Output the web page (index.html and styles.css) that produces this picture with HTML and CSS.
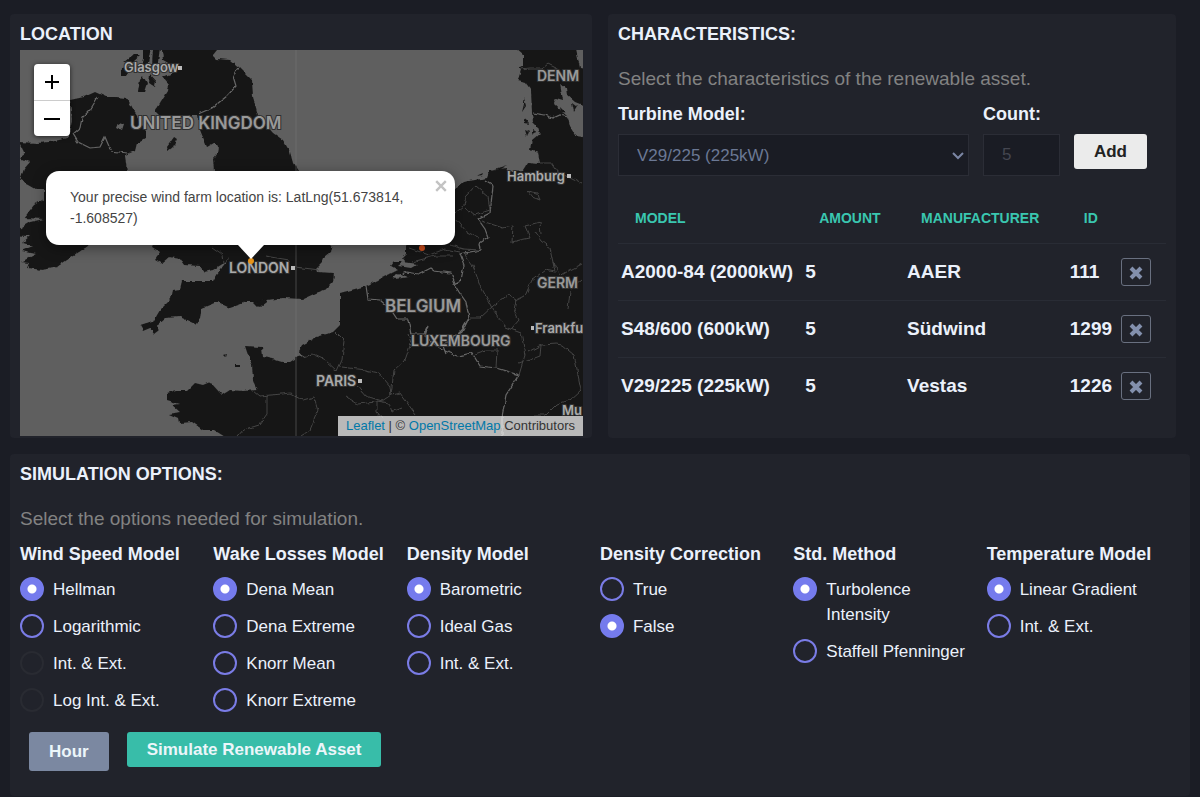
FILE: index.html
```html
<!DOCTYPE html>
<html lang="en">
<head>
<meta charset="utf-8">
<title>Wind farm simulation</title>
<link rel="stylesheet" href="styles.css">
</head>
<body>
<main class="page">
  <div class="top-row">
    <section class="panel panel-map">
      <h2 class="panel-title">LOCATION</h2>
      <div class="map">
        <svg class="map-canvas" viewBox="20 50 563 386" preserveAspectRatio="xMidYMid slice" role="img" aria-label="Map of north-west Europe">
          <defs>
            <filter id="coast" x="-5%" y="-5%" width="110%" height="110%">
              <feTurbulence type="fractalNoise" baseFrequency="0.15" numOctaves="2" seed="4" result="n"/>
              <feDisplacementMap in="SourceGraphic" in2="n" scale="4" xChannelSelector="R" yChannelSelector="G"/>
            </filter>
          </defs>
          <rect class="sea" x="0" y="30" width="620" height="430"/>
          <g class="land" filter="url(#coast)">
            <path d="M161 40L163 60 177 68 175 72 163 77 169 84 168 91 163 99 158 107 155 111 160 116 174 117 187 115 197 115 200 130 207 147 214 143 218 147 217 154 213 159 214 171 205 190 180 215 157 233 152 247 160 252 155 259 162 263 169 257 180 259 184 265 200 266 204 272 213 270 224 263 230 257 217 274 213 281 182 281 180 289 173 290 171 299 160 310 153 322 140 326 143 331 150 328 154 334 159 330 157 325 165 318 180 317 195 324 200 318 202 308 217 302 230 308 247 302 254 302 259 307 266 303 267 300 283 298 303 299 316 293 327 289 333 283 334 273 317 272 316 269 322 263 324 258 330 253 333 240 320 180 298 171 293 163 290 152 283 140 273 133 258 115 253 97 252 80 240 68 230 60 217 59 213 55 225 40Z"/>
            <path d="M70 100L84 97 95 92 106 97 115 97 127 98 132 107 137 115 139 123 146 130 146 138 137 143 135 151 125 155 127 172 110 205 88 246 70 258 57 267 43 270 27 268 29 263 21 262 36 254 21 251 33 246 22 243 30 236 10 235 22 227 30 222 44 219 24 218 34 205 44 199 44 189 36 189 20 180 24 169 30 162 19 158 25 154 19 142 37 143 50 142 68 138 72 120Z"/>
            <path d="M144 48L151 46 147 68 140 72 144 60ZM143 76L147 83 144 92 138 92 140 80ZM150 75L156 82 155 87 149 83ZM133 55L141 55 134 61 124 62ZM122 68L132 67 126 76 121 76ZM153 48L160 48 158 62 152 66Z"/>
            <path d="M174 137L177 139 173 147 168 151 167 147Z"/>
            <path d="M290 362L282 362 272 359 263 357 262 347 245 346 249 358 252 364 253 380 258 390 243 391 230 390 222 395 210 382 203 385 195 383 188 390 177 390 167 393 167 400 180 404 172 405 180 412 169 414 178 418 179 423 192 422 203 430 214 430 230 440 600 450 600 30 517 30 517 66 521 70 518 80 525 82 531 90 532 113 533 122 538 127 540 133 532 140 530 149 538 152 540 163 528 162 523 170 508 172 506 168 490 170 487 178 463 182 440 200 415 225 406 246 406 254 402 258 405 262 394 262 391 266 398 270 390 274 366 286 340 293 340 325 333 332 317 337 302 345 298 352 305 356 298 357Z"/>
          </g>
          <g class="sea" filter="url(#coast)">
            <path d="M575 45H590V70L580 68ZM560 83L566 88 567 95 575 102 590 108V138L576 136 570 126 568 117 554 104 556 98 563 100ZM516 48L523 54 523 66 516 68Z"/>
            <path d="M118 123L124 125 122 131 116 128ZM403 262L418 264 411 268 398 266ZM397 274L410 277 395 279Z"/>
          </g>
          <g class="land" filter="url(#coast)">
            <path d="M257 303L262 300 266 303 261 307ZM235 364H240V367H235ZM224 355L227 354 226 357ZM524 98L526 106 522 112 524 104ZM523 117L527 120 530 124 524 123ZM525 130L529 132 527 136ZM532 130L536 132 532 134ZM476 176L483 173 482 175ZM491 170L507 165 500 169ZM572 103L577 107 574 112ZM561 107L566 112 562 113Z"/>
          </g>
          <g class="borders" filter="url(#coast)">
            <path d="M239 68L233 76 236 86 227 96 212 108 198 114M98 97L90 110 82 118 80 128 73 134 78 142 90 148 100 147 105 137 111 151 127 153M533 113L545 115 553 118 560 115 568 117M485 181L493 186 490 213 478 219 485 229 488 237 479 243 480 250 460 254 464 265 461 280 454 284 459 292 466 302 469 318 462 330 453 339 443 346 446 354M366 286L368 299 380 300 391 310 397 319 408 319 411 334 424 334 428 326 425 336 440 349 458 356 472 353 480 366 496 368 519 375 506 395 502 417 502 436M455 283L451 273 434 271 430 268 418 274 406 272 394 278M469 318L462 332 453 338"/>
          </g>
          <g class="regions" filter="url(#coast)">
            <path d="M212 247L222 254 223 264M521 69L530 68 543 68 548 64 560 70M540 163L551 163 557 172 566 176 582 184M519 375L525 355 521 333 505 327 492 308 480 285 473 266 464 254M335 331L344 340 342 360 337 371 325 360 312 354 303 357M342 367L365 370 379 373 390 386 391 395 382 401 366 396 357 385M391 395L400 393 416 415M391 395L394 370 405 360 411 343 408 334M254 391L260 396 282 394 290 393 303 400 314 397 318 410 310 430 301 436M267 396L267 414 259 425 243 430 238 436M377 401L377 412 384 420M377 402L358 404 345 396M377 401L389 403 392 412 402 408M471 318L480 318 493 306 508 295 516 300 514 310 519 320 512 328M519 364L540 356 541 345 528 352M541 345L556 344 562 345 574 355 579 380 581 390 570 400 557 404 546 415 534 415M553 262L560 276 570 270 582 264M515 301L525 296 532 280 545 270 555 272 550 248 541 241 535 232M482 221L503 228 513 226 512 242 520 240 530 238 525 226 540 222 541 234M455 219L465 231 479 238M455 213L464 206 466 196 475 186 488 197 490 210 475 215 466 208M450 245L464 249 478 250M409 248L429 255 445 249 460 252M412 262L435 256 453 256M527 191L538 193 540 200 532 197 527 191M568 310L570 290 582 280M475 354L486 350 497 350 496 368M295 267L320 270M289 260L266 256"/>
          </g>
          <path class="tile-seam" d="M296 50V436"/>
          <circle class="site site-far" cx="422" cy="248" r="3"/>
          <g class="place">
            <text class="city" x="124" y="72">Glasgow</text>
            <text class="country" x="130" y="129">UNITED KINGDOM</text>
            <text class="capital" x="229" y="273">LONDON</text>
            <text class="country" x="385" y="312">BELGIUM</text>
            <text class="state" x="411" y="346">LUXEMBOURG</text>
            <text class="capital" x="316" y="386">PARIS</text>
            <text class="state" x="537" y="81">DENM</text>
            <text class="city" x="507" y="181">Hamburg</text>
            <text class="state" x="537" y="288">GERM</text>
            <text class="city" x="535" y="333">Frankfu</text>
            <text class="city" x="562" y="415">Mu</text>
          </g>
          <path class="dots" d="M178 66h4v4h-4zM291 266h4v4h-4zM358 379h4v4h-4zM567 174h4v4h-4zM531 326h3v4h-3z"/>
          <circle class="site" cx="251" cy="261" r="3"/>
        </svg>
        <div class="zoom-control">
          <button type="button" class="zoom-button" aria-label="Zoom in"><svg viewBox="0 0 16 16" width="16" height="16"><path d="M1 8H15M8 1V15"/></svg></button>
          <button type="button" class="zoom-button" aria-label="Zoom out"><svg viewBox="0 0 16 16" width="16" height="16"><path d="M0 8H16"/></svg></button>
        </div>
        <div class="popup">
          <p class="popup-text">Your precise wind farm location is: LatLng(51.673814, -1.608527)</p>
          <button type="button" class="popup-close" aria-label="Close popup"><svg viewBox="0 0 10 10" width="12" height="12"><path d="M1 1L9 9M9 1L1 9"/></svg></button>
          <svg class="popup-tip" viewBox="0 0 26 14" width="26" height="14"><path d="M0 0H26L13 14Z"/></svg>
        </div>
        <div class="attribution"><a href="#">Leaflet</a> | © <a href="#">OpenStreetMap</a> Contributors</div>
      </div>
    </section>

    <section class="panel">
      <h2 class="panel-title">CHARACTERISTICS:</h2>
      <p class="intro">Select the characteristics of the renewable asset.</p>
      <form class="asset-form">
        <div class="field">
          <label class="field-label" for="model">Turbine Model:</label>
          <div class="select-wrap">
            <select class="control" id="model"><option>V29/225 (225kW)</option></select>
            <svg class="chevron" viewBox="0 0 10 6" width="10" height="6"><path d="M0 0L5 5L10 0"/></svg>
          </div>
        </div>
        <div class="field">
          <label class="field-label" for="count">Count:</label>
          <input class="control" id="count" type="text" placeholder="5">
        </div>
        <button type="button" class="button button-light">Add</button>
      </form>
      <table class="assets">
        <colgroup><col class="col-model"><col class="col-amount"><col class="col-maker"><col class="col-id"><col></colgroup>
        <thead><tr><th>MODEL</th><th>AMOUNT</th><th>MANUFACTURER</th><th>ID</th><th></th></tr></thead>
        <tbody>
          <tr><td>A2000-84 (2000kW)</td><td>5</td><td>AAER</td><td>111</td><td><button type="button" class="remove" aria-label="Remove A2000-84"><svg viewBox="0 0 16 16" width="16" height="16"><path d="M3 4L13 14M13 4L3 14"/></svg></button></td></tr>
          <tr><td>S48/600 (600kW)</td><td>5</td><td>Südwind</td><td>1299</td><td><button type="button" class="remove" aria-label="Remove S48/600"><svg viewBox="0 0 16 16" width="16" height="16"><path d="M3 4L13 14M13 4L3 14"/></svg></button></td></tr>
          <tr><td>V29/225 (225kW)</td><td>5</td><td>Vestas</td><td>1226</td><td><button type="button" class="remove" aria-label="Remove V29/225"><svg viewBox="0 0 16 16" width="16" height="16"><path d="M3 4L13 14M13 4L3 14"/></svg></button></td></tr>
        </tbody>
      </table>
    </section>
  </div>

  <section class="panel">
    <h2 class="panel-title">SIMULATION OPTIONS:</h2>
    <p class="intro">Select the options needed for simulation.</p>
    <form>
      <div class="options">
        <fieldset class="group"><legend>Wind Speed Model</legend>
          <label class="choice"><input type="radio" name="wind" checked><span>Hellman</span></label>
          <label class="choice"><input type="radio" name="wind"><span>Logarithmic</span></label>
          <label class="choice"><input type="radio" name="wind" disabled><span>Int. &amp; Ext.</span></label>
          <label class="choice"><input type="radio" name="wind" disabled><span>Log Int. &amp; Ext.</span></label>
        </fieldset>
        <fieldset class="group"><legend>Wake Losses Model</legend>
          <label class="choice"><input type="radio" name="wake" checked><span>Dena Mean</span></label>
          <label class="choice"><input type="radio" name="wake"><span>Dena Extreme</span></label>
          <label class="choice"><input type="radio" name="wake"><span>Knorr Mean</span></label>
          <label class="choice"><input type="radio" name="wake"><span>Knorr Extreme</span></label>
        </fieldset>
        <fieldset class="group"><legend>Density Model</legend>
          <label class="choice"><input type="radio" name="density" checked><span>Barometric</span></label>
          <label class="choice"><input type="radio" name="density"><span>Ideal Gas</span></label>
          <label class="choice"><input type="radio" name="density"><span>Int. &amp; Ext.</span></label>
        </fieldset>
        <fieldset class="group"><legend>Density Correction</legend>
          <label class="choice"><input type="radio" name="correction"><span>True</span></label>
          <label class="choice"><input type="radio" name="correction" checked><span>False</span></label>
        </fieldset>
        <fieldset class="group"><legend>Std. Method</legend>
          <label class="choice"><input type="radio" name="std" checked><span>Turbolence Intensity</span></label>
          <label class="choice"><input type="radio" name="std"><span>Staffell Pfenninger</span></label>
        </fieldset>
        <fieldset class="group"><legend>Temperature Model</legend>
          <label class="choice"><input type="radio" name="temp" checked><span>Linear Gradient</span></label>
          <label class="choice"><input type="radio" name="temp"><span>Int. &amp; Ext.</span></label>
        </fieldset>
      </div>
      <div class="actions">
        <button type="button" class="button button-muted">Hour</button>
        <button type="button" class="button button-accent">Simulate Renewable Asset</button>
      </div>
    </form>
  </section>
</main>
</body>
</html>
```
FILE: styles.css
```css
* { box-sizing: border-box; }

body {
  margin: 0;
  background: #1b1d25;
  color: #ebf1fb;
  font-family: "Liberation Sans", Arial, sans-serif;
  font-size: 17px;
  line-height: 25px;
}

button, input, select { font: inherit; margin: 0; }

.page {
  display: flex;
  flex-direction: column;
  gap: 16px;
  padding: 14px 10px 1px;
}

.top-row {
  display: grid;
  grid-template-columns: 582fr 568fr;
  gap: 16px;
  padding-right: 14px;
}

.panel {
  min-width: 0;
  padding: 10px 10px 24px;
  background: #21232b;
  border-radius: 4px;
}

.panel-map { padding: 10px 9px 2px 10px; }

.panel-title {
  margin: 0;
  font-size: 18px;
  line-height: 20px;
}

.intro {
  margin: 21px 0 9px;
  color: #828282;
  font-size: 19px;
  line-height: 28px;
}

/* Map */
.map {
  position: relative;
  margin-top: 6px;
  aspect-ratio: 563 / 386;
  overflow: hidden;
  background: #5f5f5f;
}

.map-canvas { display: block; width: 100%; height: 100%; }
.sea { fill: #5f5f5f; }
.land { fill: #171717; }
.borders { fill: none; stroke: #686868; stroke-width: 1.2; }
.regions { fill: none; stroke: #454545; stroke-width: 1; }
.tile-seam { stroke: #777; stroke-opacity: .5; }
.site { fill: #e8941a; }
.site-far { fill: #d4511e; }
.dots { fill: #bbb; }

.place {
  fill: #999;
  font-family: Inter, sans-serif;
  font-weight: 600;
  stroke: #303030;
  stroke-width: 2;
  paint-order: stroke;
}

.city { font-size: 13px; fill: #aaa; }
.capital { font-size: 14px; fill: #aaa; }
.state { font-size: 14px; }
.country { font-size: 17px; }

.zoom-control {
  position: absolute;
  top: 14px;
  left: 14px;
  width: 36px;
  border-radius: 4px;
  overflow: hidden;
  box-shadow: 0 1px 5px rgba(0, 0, 0, .65);
}

.zoom-button {
  display: grid;
  place-items: center;
  width: 36px;
  height: 36px;
  padding: 0;
  border: 0;
  background: #fff;
}

.zoom-button + .zoom-button { border-top: 1px solid #ccc; }
.zoom-button path { fill: none; stroke: #000; stroke-width: 2; }

.popup {
  position: absolute;
  top: 121px;
  left: 26px;
  width: 409px;
  padding: 16px 24px;
  background: #fff;
  border-radius: 13px;
  box-shadow: 0 3px 14px rgba(0, 0, 0, .4);
}

.popup-text {
  margin: 0;
  color: #444;
  font-size: 14px;
  line-height: 21px;
}

.popup-close {
  position: absolute;
  top: 9px;
  right: 8px;
  display: flex;
  padding: 0;
  border: 0;
  background: none;
}

.popup-close path { stroke: #c3c3c3; stroke-width: 2; }
.popup-tip { position: absolute; top: 100%; left: 192px; }
.popup-tip path { fill: #fff; }

.attribution {
  position: absolute;
  right: 0;
  bottom: 0;
  padding: 0 8px;
  background: rgba(255, 255, 255, .7);
  color: #333;
  font-size: 13px;
  line-height: 20px;
}

.attribution a { color: #0078a8; text-decoration: none; }

/* Asset form */
.asset-form {
  display: grid;
  grid-template-columns: 351fr 77fr auto;
  gap: 14px;
  padding-right: 19px;
}

.field { min-width: 0; }

.field-label {
  display: block;
  margin-bottom: 8px;
  font-size: 18px;
  font-weight: bold;
  line-height: 24px;
}

.select-wrap { position: relative; }

.control {
  display: block;
  width: 100%;
  height: 42px;
  padding: 0 18px;
  appearance: none;
  background: #1a1c24;
  border: 1px solid #2b2d36;
  border-radius: 0;
  color: #6b7894;
}

.control::placeholder { color: #444650; opacity: 1; }

.chevron {
  position: absolute;
  top: 19px;
  right: 6px;
  overflow: visible;
  pointer-events: none;
}

.chevron path { fill: none; stroke: #7b86a4; stroke-width: 2; }

.button {
  padding: 5px 20px;
  border: 0;
  border-radius: 3px;
  font-weight: bold;
}

.button-light {
  align-self: start;
  margin-top: 32px;
  background: #ebebeb;
  color: #222;
}

/* Asset table */
.assets {
  width: 100%;
  margin-top: 17px;
  border-collapse: collapse;
  table-layout: fixed;
  font-weight: bold;
}

.col-model { width: 33.6%; }
.col-amount { width: 18.6%; }
.col-maker { width: 29.7%; }
.col-id { width: 9.3%; }

.assets th {
  height: 50px;
  padding: 2px 0 0 17px;
  color: #3ac7b0;
  font-size: 14px;
  text-align: left;
}

.assets td {
  height: 57px;
  padding: 0 0 0 3px;
  border-top: 1px solid #292c35;
  font-size: 19px;
}

.remove {
  display: grid;
  place-items: center;
  width: 30px;
  height: 28px;
  padding: 0;
  background: none;
  border: 1px solid #697080;
  border-radius: 3px;
}

.remove path { stroke: #8390ad; stroke-width: 4; }

/* Simulation options */
.options {
  display: grid;
  grid-template-columns: repeat(6, 1fr);
}

.group {
  min-width: 0;
  margin: 0;
  padding: 0 16px 0 0;
  border: 0;
}

.group legend {
  margin-bottom: 11px;
  padding: 0;
  font-size: 18px;
  font-weight: bold;
  line-height: 24px;
  white-space: nowrap;
}

.choice {
  display: flex;
  gap: 9px;
  margin-bottom: 12px;
}

.choice input {
  flex: none;
  width: 24px;
  height: 24px;
  appearance: none;
  border: 2px solid #7a7ce6;
  border-radius: 50%;
}

.choice input:checked {
  background: radial-gradient(circle, #fff 4px, #757bed 5px);
  border-color: #757bed;
}

.choice input:disabled { border-color: #292b32; }

.actions {
  display: flex;
  align-items: flex-start;
  gap: 18px;
  padding: 7px 9px 1px;
}

.actions .button { color: #ecf6fa; }
.actions .button-muted { padding: 7px 20px; background: #7b88a1; }
.actions .button-accent { background: #38bda9; }
```
